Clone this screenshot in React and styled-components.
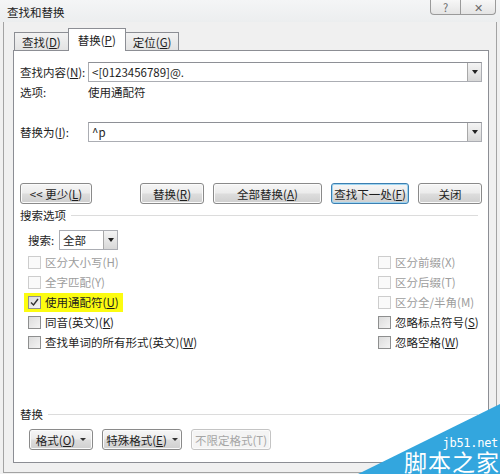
import React from 'react';
import styled, { createGlobalStyle, css } from 'styled-components';

const Global = createGlobalStyle`
    html, body { margin:0; padding:0; background:#f0f0f0; }
    body {
        font-family: "Noto Sans CJK SC", "Noto Sans", sans-serif;
        font-size:11.5px;
        color:#1e1e1e;
        white-space:nowrap;
    }
`

const Window = styled.div`
    position:relative;
    width:500px;
    height:474px;
    overflow:hidden;
    background:#f0f0f0;
    display:flex;
    flex-direction:column;
`

const TitleBar = styled.div`
    height:22px;
    display:flex;
    align-items:flex-start;
    justify-content:space-between;
    background:linear-gradient(#f4f5f6, #eceeef);
    .title_wrap{
        padding:4px 0 0 7px;
        font-size:11.5px;
        color:#222;
        line-height:16px;
    }
`

const Caption = styled.div`
    display:flex;
    margin-right:4px;
`

const CaptionButton = styled.div`
    width:${p => p.$w}px;
    height:14px;
    display:flex;
    align-items:center;
    justify-content:center;
    border:1px solid #9a9a9a;
    border-top:none;
    background:linear-gradient(#f7f7f7, #e4e4e4);
    color:#6a6a6a;
    font-size:11px;
    line-height:1;
    &:first-child{ border-radius:0 0 0 4px; }
    &:last-child{ border-left:none; border-radius:0 0 4px 0; }
`

const Client = styled.div`
    flex:1;
    margin:0 3px 1px 3px;
    border:1px solid #a3a3a3;
    border-top:none;
    padding:7px 7px 9px 9px;
    display:flex;
    flex-direction:column;
`

const Tabs = styled.div`
    height:21px;
    display:flex;
    align-items:flex-end;
    padding-left:1px;
    position:relative;
    z-index:1;
`

const Tab = styled.div`
    height:${p => p.$active ? 22 : 17}px;
    padding:0 ${p => p.$active ? 9 : 7}px;
    display:flex;
    align-items:center;
    border:1px solid #8c8e94;
    border-bottom:none;
    margin-bottom:${p => p.$active ? -1 : 0}px;
    background:${p => p.$active ? '#fff' : 'linear-gradient(#f2f2f2, #e3e3e3)'};
    ${p => !p.$active && css`border-right:none;`}
    ${p => p.$last && css`border-right:1px solid #8c8e94; border-left:none;`}
    color:#1e1e1e;
`

const Panel = styled.div`
    flex:1;
    background:#fff;
    border:1px solid #8c8e94;
    padding:11px 6px 12px 6px;
    display:flex;
    flex-direction:column;
`

const FieldRow = styled.div`
    display:flex;
    align-items:center;
    height:20px;
    margin-top:${p => p.$top || 0}px;
`

const Label = styled.div`
    width:68px;
    flex-shrink:0;
`

const Combo = styled.div`
    flex:1;
    height:20px;
    box-sizing:border-box;
    border:1px solid #abadb3;
    border-top-color:#8e9096;
    display:flex;
    align-items:center;
    padding-left:3px;
    background:#fff;
    .value{ flex:1; }
`

const DropButton = styled.div`
    width:14px;
    height:18px;
    box-sizing:border-box;
    border-left:1px solid #a8a8a8;
    background:linear-gradient(#f4f4f4, #d8d8d8);
    display:flex;
    align-items:center;
    justify-content:center;
    &::after{
        content:'';
        border-left:3px solid transparent;
        border-right:3px solid transparent;
        border-top:4px solid #222;
    }
`

const InfoRow = styled.div`
    display:flex;
    height:16px;
    align-items:center;
    margin-top:2px;
`

const ButtonRow = styled.div`
    display:flex;
    margin-top:41px;
    .group{
        margin-left:auto;
        display:flex;
        gap:9px;
    }
`

const Button = styled.div`
    width:${p => p.$w}px;
    height:21px;
    box-sizing:border-box;
    display:flex;
    align-items:center;
    justify-content:center;
    gap:5px;
    border:1px solid ${p => p.$default ? '#3c7fb1' : '#8a8a8a'};
    border-radius:3px;
    background:linear-gradient(#f6f6f6 0%, #ececec 45%, #dcdcdc 55%, #cfcfcf 100%);
    box-shadow:${p => p.$default ? 'inset 0 0 0 1px #9fd5f1' : 'inset 0 0 0 1px #fbfbfb'};
    color:${p => p.$disabled ? '#a6a6a6' : '#1e1e1e'};
    ${p => p.$disabled && css`
        border-color:#c4c4c4;
        background:#f4f4f4;
    `}
    .caret{
        border-left:3px solid transparent;
        border-right:3px solid transparent;
        border-top:3px solid #333;
    }
`

const Group = styled.div`
    display:flex;
    align-items:center;
    gap:5px;
    height:14px;
    margin-top:${p => p.$top || 0}px;
    &::after{
        content:'';
        flex:1;
        height:1px;
        margin-right:4px;
        background:#dcdcdc;
    }
`

const SearchRow = styled.div`
    display:flex;
    align-items:center;
    margin:8px 0 0 8px;
    .label_wrap{ width:31px; }
`

const Select = styled.div`
    width:59px;
    height:20px;
    box-sizing:border-box;
    border:1px solid #abadb3;
    display:flex;
    align-items:center;
    padding-left:3px;
    .value{ flex:1; }
`

const Options = styled.div`
    display:grid;
    grid-template-columns:350px 1fr;
    grid-auto-rows:20px;
    margin:2px 0 0 8px;
`

const Option = styled.div`
    display:flex;
    align-items:center;
    gap:4px;
    color:${p => p.$disabled ? '#9d9d9d' : '#1e1e1e'};
    ${p => p.$highlight && css`
        justify-self:start;
        margin-left:-4px;
        padding:0 4px 0 4px;
        height:19px;
        align-self:center;
        background:#fcfc10;
    `}
`

const Box = styled.span`
    width:11px;
    height:11px;
    flex-shrink:0;
    border:1px solid ${p => p.$disabled ? '#cdcdcd' : '#8e8f8f'};
    background:${p => p.$disabled ? '#fafafa' : 'linear-gradient(135deg, #dcdcdc, #f4f4f4)'};
    display:flex;
    align-items:center;
    justify-content:center;
    svg{ display:block; }
`

const BottomRow = styled.div`
    display:flex;
    gap:9px;
    margin:8px 0 0 9px;
`

const Watermark = styled.div`
    position:absolute;
    right:0;
    bottom:0;
    width:142px;
    height:70px;
    svg{ position:absolute; inset:0; }
    .site{
        position:absolute;
        right:2px;
        top:33px;
        color:#fff;
        font-family:"DejaVu Sans Mono", monospace;
        font-size:12px;
        line-height:12px;
        letter-spacing:-0.3px;
    }
    .name{
        position:absolute;
        right:0;
        bottom:1px;
        color:#fff;
        font-family:"Noto Sans CJK SC", sans-serif;
        font-size:23px;
        line-height:24px;
        letter-spacing:1px;
    }
`

const Check = ({ checked, disabled }) => (
    <Box $disabled={disabled}>
        {checked && (
            <svg width="9" height="9" viewBox="0 0 9 9">
                <path d="M1 4.5 L3.5 7 L8 1" fill="none" stroke="#333" strokeWidth="1.4" />
            </svg>
        )}
    </Box>
)

const leftOptions = [
    { text: '区分大小写', key: 'H', disabled: true },
    { text: '全字匹配', key: 'Y', disabled: true },
    { text: '使用通配符', key: 'U', checked: true, highlight: true },
    { text: '同音(英文)', key: 'K' },
    { text: '查找单词的所有形式(英文)', key: 'W' },
]

const rightOptions = [
    { text: '区分前缀', key: 'X', disabled: true },
    { text: '区分后缀', key: 'T', disabled: true },
    { text: '区分全/半角', key: 'M', disabled: true },
    { text: '忽略标点符号', key: 'S' },
    { text: '忽略空格', key: 'W' },
]

const Accel = ({ k, plain }) => plain ? <>({k})</> : <>(<u>{k}</u>)</>

export default function App() {
    const rows = leftOptions.map((l, i) => [l, rightOptions[i]])
    return (
        <Window>
            <Global />
            <TitleBar>
                <div className='title_wrap'>查找和替换</div>
                <Caption>
                    <CaptionButton $w={29}>?</CaptionButton>
                    <CaptionButton $w={34}>✕</CaptionButton>
                </Caption>
            </TitleBar>
            <Client>
                <Tabs>
                    <Tab>查找<Accel k='D' /></Tab>
                    <Tab $active>替换<Accel k='P' /></Tab>
                    <Tab $last>定位<Accel k='G' /></Tab>
                </Tabs>
                <Panel>
                    <FieldRow>
                        <Label>查找内容<Accel k='N' />:</Label>
                        <Combo><span className='value'>&lt;[0123456789]@.</span><DropButton /></Combo>
                    </FieldRow>
                    <InfoRow>
                        <Label>选项:</Label>
                        <span>使用通配符</span>
                    </InfoRow>
                    <FieldRow $top={22}>
                        <Label>替换为<Accel k='I' />:</Label>
                        <Combo><span className='value'>^p</span><DropButton /></Combo>
                    </FieldRow>
                    <ButtonRow>
                        <Button $w={72}><span>&lt;&lt; 更少<Accel k='L' /></span></Button>
                        <div className='group'>
                            <Button $w={64}><span>替换<Accel k='R' /></span></Button>
                            <Button $w={109}><span>全部替换<Accel k='A' /></span></Button>
                            <Button $w={78} $default><span>查找下一处<Accel k='F' /></span></Button>
                            <Button $w={64}><span>关闭</span></Button>
                        </div>
                    </ButtonRow>
                    <Group $top={4}>搜索选项</Group>
                    <SearchRow>
                        <span className='label_wrap'>搜索:</span>
                        <Select><span className='value'>全部</span><DropButton /></Select>
                    </SearchRow>
                    <Options>
                        {rows.map(([l, r], i) => (
                            <React.Fragment key={i}>
                                <Option $disabled={l.disabled} $highlight={l.highlight}>
                                    <Check checked={l.checked} disabled={l.disabled} />
                                    <span>{l.text}<Accel k={l.key} plain={l.disabled} /></span>
                                </Option>
                                <Option $disabled={r.disabled}>
                                    <Check disabled={r.disabled} />
                                    <span>{r.text}<Accel k={r.key} plain={r.disabled} /></span>
                                </Option>
                            </React.Fragment>
                        ))}
                    </Options>
                    <Group style={{ marginTop: 'auto' }}>替换</Group>
                    <BottomRow>
                        <Button $w={64}><span>格式<Accel k='O' /></span><span className='caret' /></Button>
                        <Button $w={80}><span>特殊格式<Accel k='E' /></span><span className='caret' /></Button>
                        <Button $w={80} $disabled><span>不限定格式(T)</span></Button>
                    </BottomRow>
                </Panel>
            </Client>
            <Watermark>
                <svg width="142" height="70" viewBox="0 0 142 70">
                    <polygon points="0,70 142,70 142,0" fill="#33a6de" />
                </svg>
                <span className='site'>jb51.net</span>
                <span className='name'>脚本之家</span>
            </Watermark>
        </Window>
    );
}
